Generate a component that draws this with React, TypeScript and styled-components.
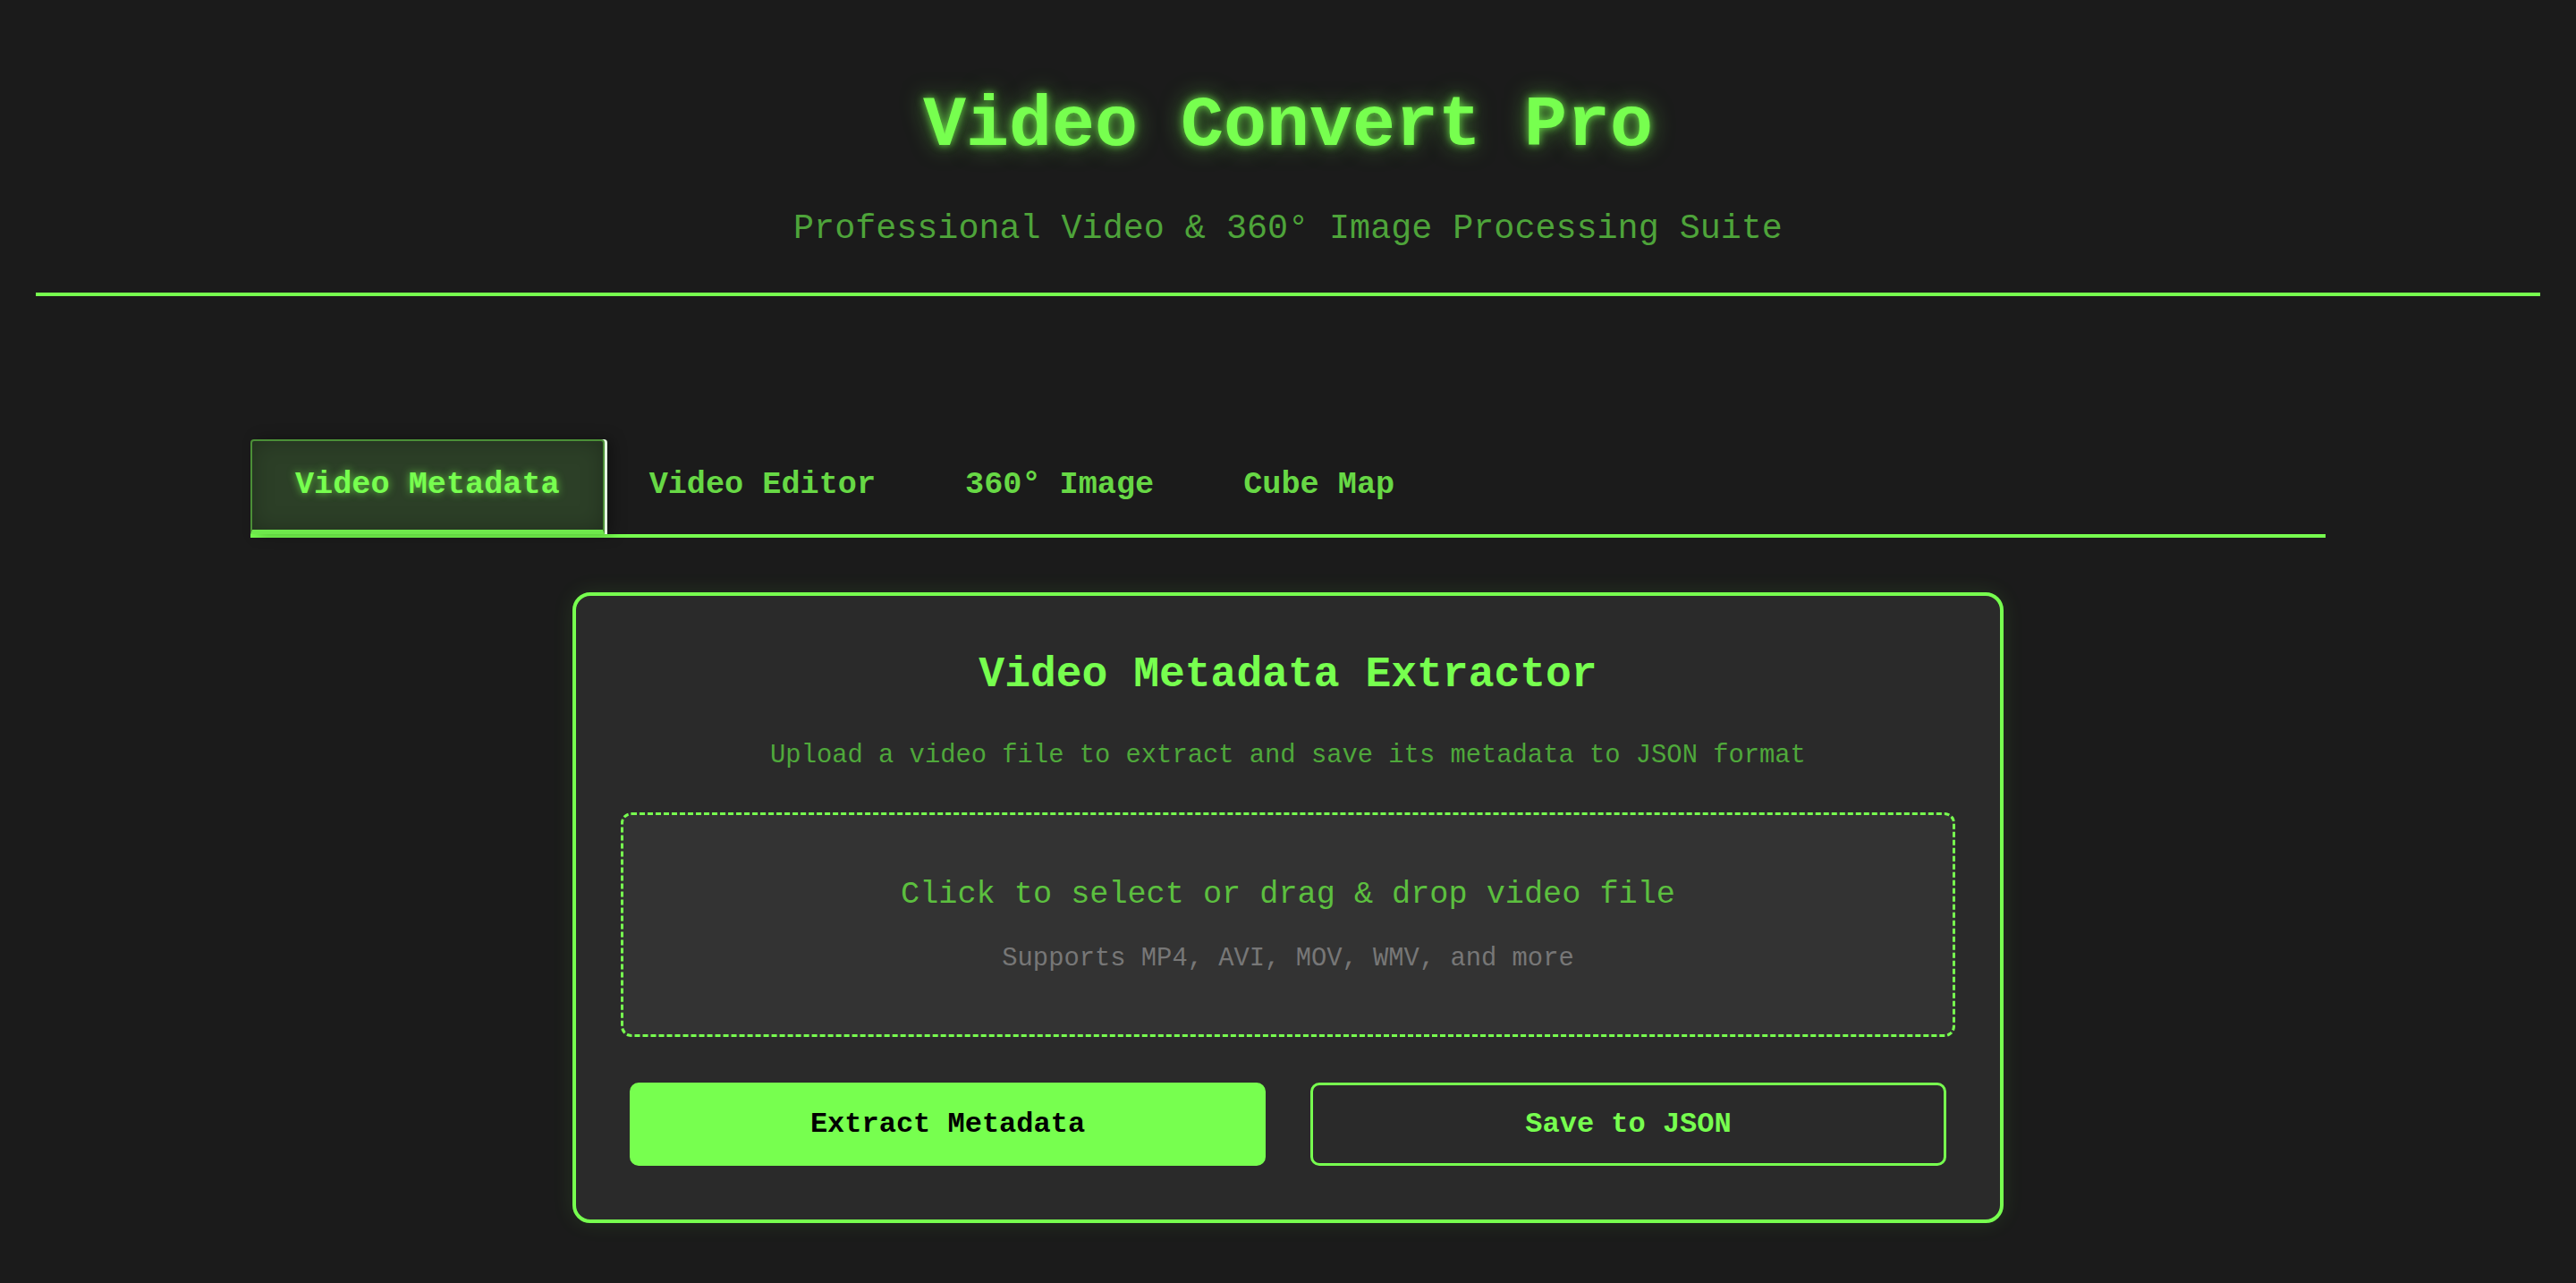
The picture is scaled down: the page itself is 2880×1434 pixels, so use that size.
import React, { useState } from "react";
import styled, { createGlobalStyle, css } from "styled-components";

const GREEN = "#77ff4f";

const GlobalStyle = createGlobalStyle`
  html, body {
    margin: 0;
    padding: 0;
    background: #1b1b1b;
  }
  body {
    font-family: "Liberation Mono", "Courier New", monospace;
    color: ${GREEN};
  }
  * { box-sizing: border-box; }
`;

const Page = styled.div`
  min-height: 1434px;
  padding: 0 40px;
  background: #1b1b1b;
`;

const Header = styled.header`
  text-align: center;
  padding: 95px 0 49px;
  border-bottom: 4px solid ${GREEN};
`;

const Title = styled.h1`
  margin: 0;
  font-size: 80px;
  font-weight: 700;
  line-height: normal;
  color: ${GREEN};
  text-shadow: 0 0 10px rgba(119, 255, 79, 0.8), 0 0 26px rgba(119, 255, 79, 0.5);
`;

const Subtitle = styled.p`
  margin: 48px 0 0;
  font-size: 38.4px;
  line-height: normal;
  color: #4ea43a;
`;

const Main = styled.main`
  max-width: 2320px;
  margin: 160px auto 0;
`;

const TabBar = styled.nav`
  display: flex;
  border-bottom: 4px solid ${GREEN};
`;

const Tab = styled.button<{ $active?: boolean }>`
  font-family: inherit;
  font-size: 35.2px;
  font-weight: 700;
  line-height: normal;
  padding: 29px 48px 30px;
  margin: 0;
  background: transparent;
  color: #67d845;
  border: 2px solid transparent;
  border-bottom-width: 5px;
  border-radius: 4px 4px 0 0;
  cursor: pointer;
  ${(p) =>
    p.$active &&
    css`
      background: #2c3f27;
      color: ${GREEN};
      border-color: rgba(119, 255, 79, 0.42);
      border-bottom-color: #6ee84b;
      text-shadow: 0 0 10px rgba(119, 255, 79, 0.7);
      box-shadow: 3px 0 0 #e4fbe0, 8px 0 16px rgba(0, 0, 0, 0.35),
        inset 0 0 24px rgba(0, 0, 0, 0.25);
    `}
`;

const Card = styled.section`
  width: 1600px;
  margin: 61px auto 0;
  padding: 61px 50px 60px;
  background: #2a2a2a;
  border: 4px solid ${GREEN};
  border-radius: 20px;
  box-shadow: 0 0 24px rgba(119, 255, 79, 0.1);
  text-align: center;
`;

const CardTitle = styled.h2`
  margin: 0;
  font-size: 48px;
  font-weight: 700;
  line-height: normal;
  color: ${GREEN};
`;

const CardDesc = styled.p`
  margin: 47px 0 0;
  font-size: 28.8px;
  line-height: normal;
  color: #4fa83b;
`;

const DropZone = styled.label`
  display: block;
  margin-top: 47px;
  padding: 69px 20px 68px;
  background: #333333;
  border: 3px dashed ${GREEN};
  border-radius: 12px;
  cursor: pointer;
`;

const DropMain = styled.div`
  font-size: 35.2px;
  line-height: normal;
  color: #5cbf3f;
`;

const DropHint = styled.div`
  margin-top: 35px;
  font-size: 28.8px;
  line-height: normal;
  color: #777777;
`;

const HiddenInput = styled.input`
  display: none;
`;

const ButtonRow = styled.div`
  display: grid;
  grid-template-columns: 1fr 1fr;
  gap: 50px;
  margin-top: 51px;
  padding: 0 10px;
`;

const ActionButton = styled.button<{ $primary?: boolean }>`
  font-family: inherit;
  font-size: 32px;
  font-weight: 700;
  line-height: normal;
  padding: 25px 20px;
  border: 3px solid ${GREEN};
  border-radius: 10px;
  cursor: pointer;
  background: ${(p) => (p.$primary ? GREEN : "transparent")};
  color: ${(p) => (p.$primary ? "#000000" : GREEN)};
`;

const tabs = ["Video Metadata", "Video Editor", "360° Image", "Cube Map"];

export default function App() {
  const [active, setActive] = useState(0);
  return (
    <>
      <GlobalStyle />
      <Page>
        <Header>
          <Title>Video Convert Pro</Title>
          <Subtitle>Professional Video &amp; 360° Image Processing Suite</Subtitle>
        </Header>
        <Main>
          <TabBar>
            {tabs.map((t, i) => (
              <Tab key={t} $active={i === active} onClick={() => setActive(i)}>
                {t}
              </Tab>
            ))}
          </TabBar>
          <Card>
            <CardTitle>Video Metadata Extractor</CardTitle>
            <CardDesc>
              Upload a video file to extract and save its metadata to JSON format
            </CardDesc>
            <DropZone>
              <HiddenInput type="file" accept="video/*" />
              <DropMain>Click to select or drag &amp; drop video file</DropMain>
              <DropHint>Supports MP4, AVI, MOV, WMV, and more</DropHint>
            </DropZone>
            <ButtonRow>
              <ActionButton $primary>Extract Metadata</ActionButton>
              <ActionButton>Save to JSON</ActionButton>
            </ButtonRow>
          </Card>
        </Main>
      </Page>
    </>
  );
}
